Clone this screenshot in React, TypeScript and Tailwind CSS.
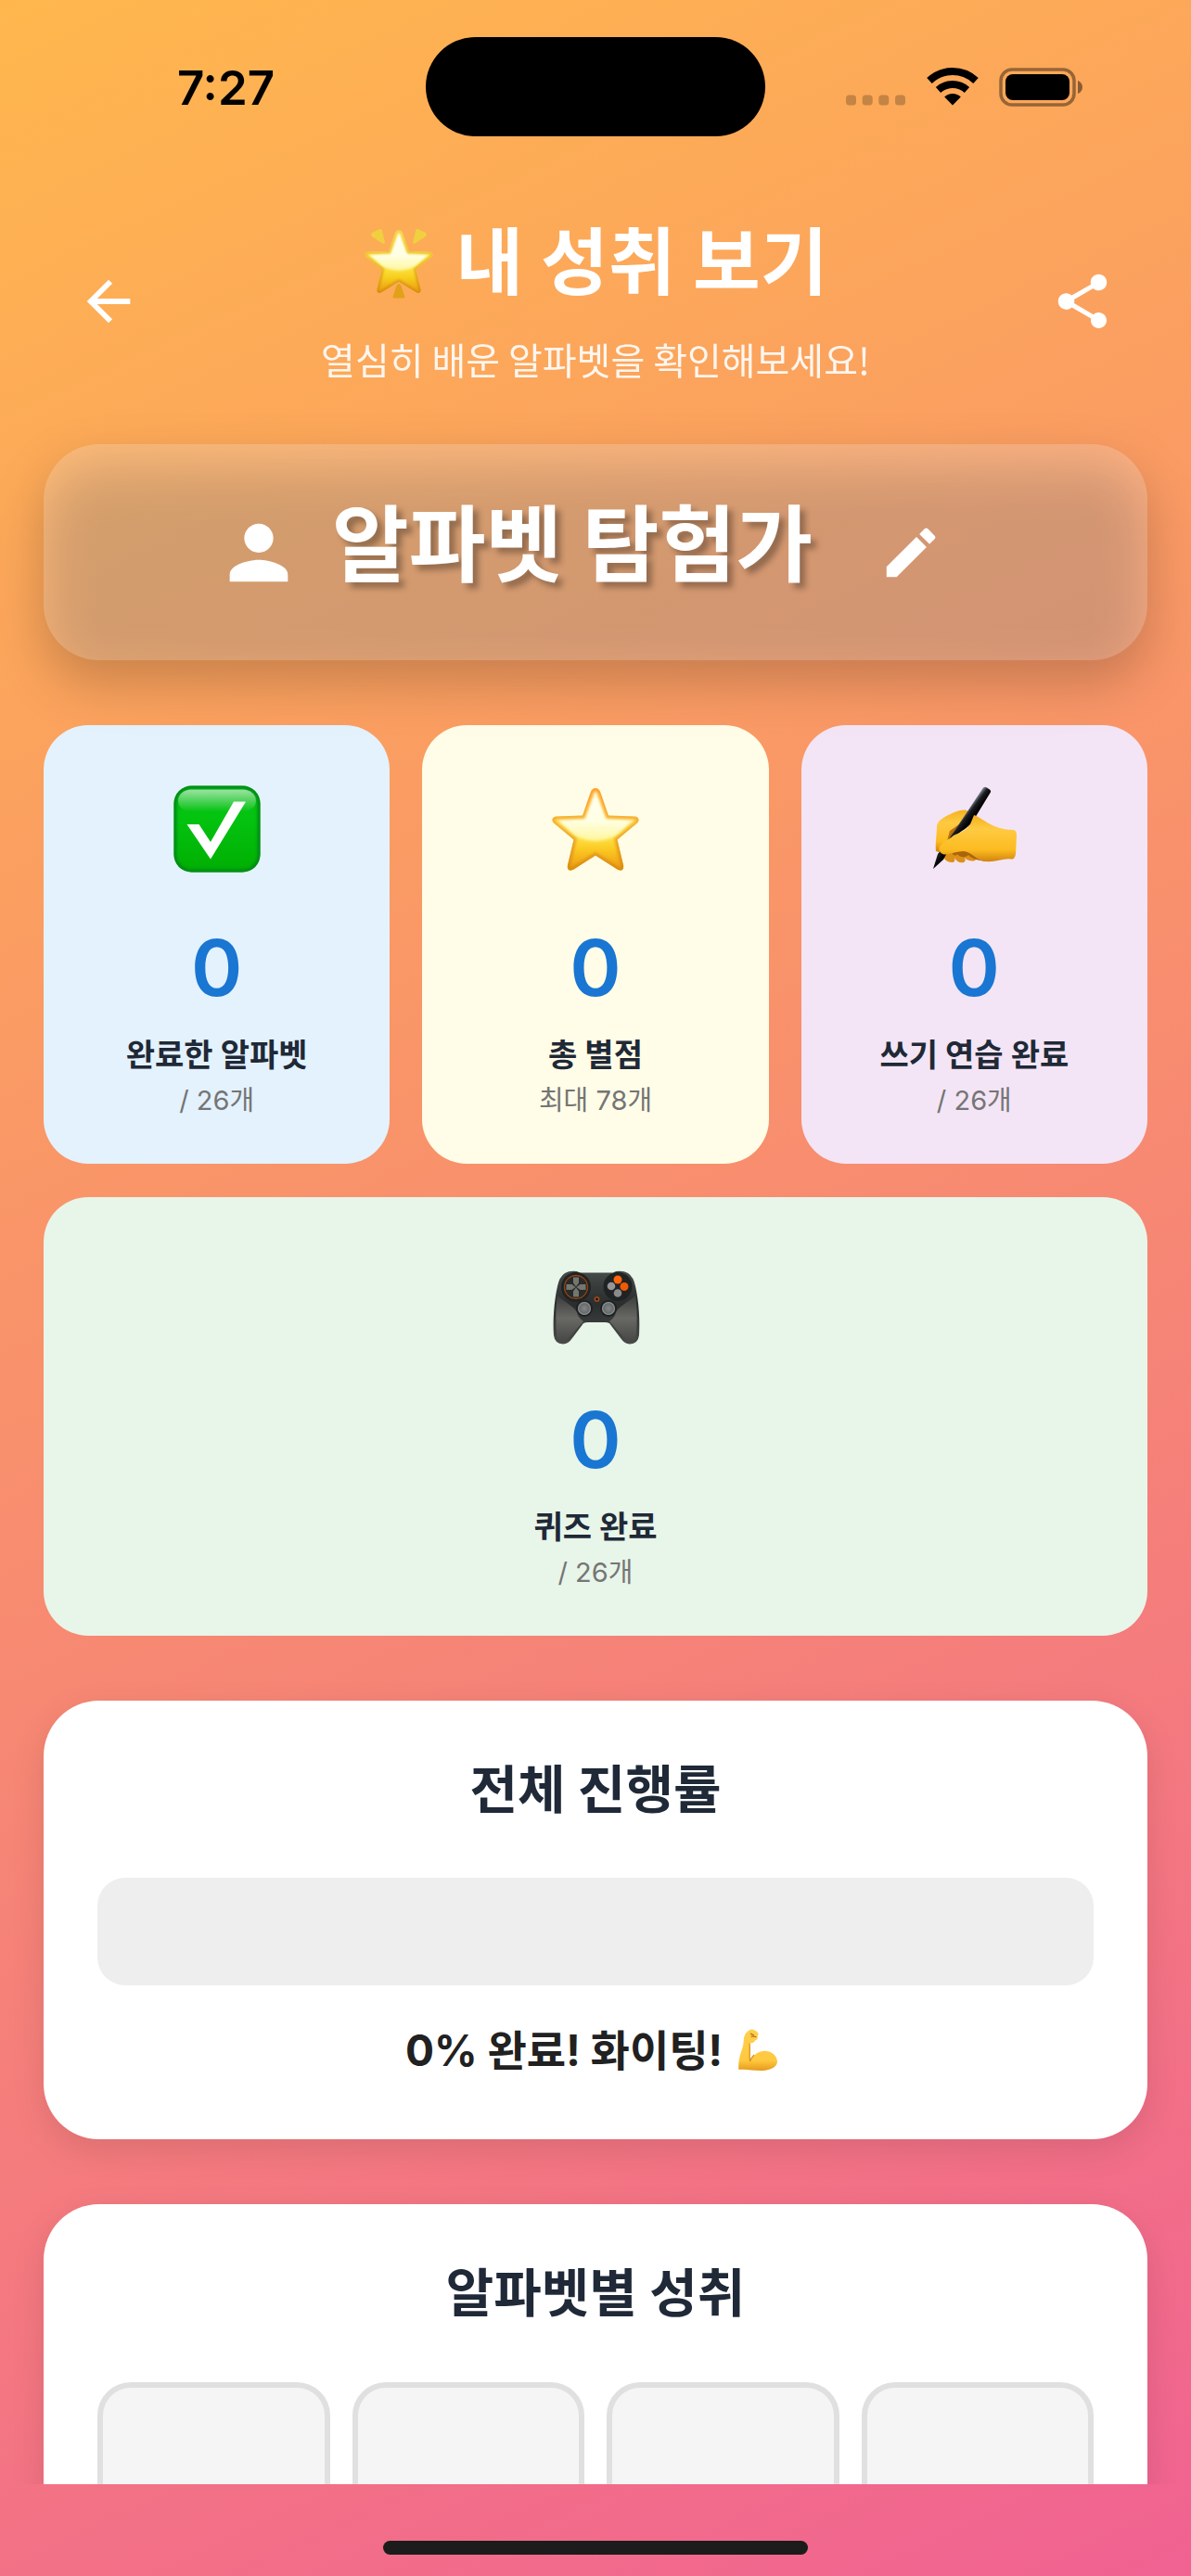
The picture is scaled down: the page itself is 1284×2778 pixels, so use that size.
import React, { useId } from "react";
import { MdArrowBack, MdShare, MdPerson, MdEdit } from "react-icons/md";

const STAR =
  "M50 6 C53 6 54.5 8 55.5 11 L64 35.5 L92 36.5 C97 36.7 98 41 94.5 44 L73.5 61.5 L80 89 C81 94 77.5 96 73.5 93.5 L50 78.5 L26.5 93.5 C22.5 96 19 94 20 89 L26.5 61.5 L5.5 44 C2 41 3 36.7 8 36.5 L36 35.5 L44.5 11 C45.5 8 47 6 50 6 Z";

function StarShape({ glow = false }: { glow?: boolean }) {
  const id = useId();
  return (
    <>
      <defs>
        <linearGradient id={id + "f"} x1="0" y1="0" x2="0" y2="1">
          <stop offset="0" stopColor={glow ? "#fff3a0" : "#ffdf8a"} />
          <stop offset="0.55" stopColor="#ffe84d" />
          <stop offset="0.75" stopColor={glow ? "#f7cf1d" : "#fbc822"} />
          <stop offset="1" stopColor="#eb9712" />
        </linearGradient>
        <linearGradient id={id + "e"} x1="0" y1="0" x2="0" y2="1">
          <stop offset="0" stopColor={glow ? "#f3d23c" : "#ff9e2c"} />
          <stop offset="0.45" stopColor={glow ? "#ecc02c" : "#f5b136"} />
          <stop offset="1" stopColor="#d98c0c" />
        </linearGradient>
        <linearGradient id={id + "h"} x1="0" y1="0" x2="0" y2="1">
          <stop offset="0" stopColor="#fffff0" />
          <stop offset="0.6" stopColor="#ffffe4" />
          <stop offset="1" stopColor="#fff69c" />
        </linearGradient>
        <clipPath id={id + "c"}>
          <path d={STAR} />
        </clipPath>
        <filter id={id + "b"} x="-10%" y="-10%" width="120%" height="120%">
          <feGaussianBlur stdDeviation="1.6" />
        </filter>
      </defs>
      <path d={STAR} fill={`url(#${id}f)`} />
      <g clipPath={`url(#${id}c)`}>
        <path
          d="M50 9 L62 38.5 L91 40 L74 56 C60 65 40 65 26 56 L9 40 L38 38.5 Z"
          fill={`url(#${id}h)`}
          filter={`url(#${id}b)`}
        />
        <path d={STAR} fill="none" stroke={`url(#${id}e)`} strokeWidth="6" filter={`url(#${id}b)`} />
      </g>
    </>
  );
}

function StarIcon() {
  return (
    <svg viewBox="2 2 96 96" className="size-24" role="img" aria-label="별">
      <StarShape />
    </svg>
  );
}

function GlowingStarIcon() {
  return (
    <svg viewBox="0 0 76 80" className="h-20 w-[76px]" role="img" aria-label="빛나는 별">
      <g transform="translate(-1 1) scale(0.78 0.76)">
        <StarShape glow />
      </g>
      <path d="M9 8 L17.500 4 Q19 3.500 19.700 5 L23 18.500 Q22.500 20.500 20.500 19.500 L9 12 Q7.500 10 9 8 Z" fill="#f0d03f" />
      <path d="M67 8 L58.500 4 Q57 3.500 56.300 5 L53 18.500 Q53.500 20.500 55.500 19.500 L67 12 Q68.500 10 67 8 Z" fill="#f0d03f" />
      <path d="M38 63 Q39.500 63 40.500 65.500 L44.500 77 Q44.500 78.500 43 78.500 H33 Q31.500 78.500 31.500 77 L35.500 65.500 Q36.500 63 38 63 Z" fill="#e2a118" />
    </svg>
  );
}

function CheckIcon() {
  return (
    <svg viewBox="0 0 96 96" className="size-24" role="img" aria-label="완료">
      <defs>
        <linearGradient id="ck" x1="0" y1="0" x2="0" y2="1">
          <stop offset="0" stopColor="#06ba18" />
          <stop offset="0.35" stopColor="#04c410" />
          <stop offset="1" stopColor="#00ae02" />
        </linearGradient>
        <linearGradient id="ckh" x1="0" y1="0" x2="0" y2="1">
          <stop offset="0" stopColor="#fff" stopOpacity="0.6" />
          <stop offset="1" stopColor="#fff" stopOpacity="0" />
        </linearGradient>
        <clipPath id="ckc">
          <rect x="1.500" y="1.500" width="93" height="93" rx="19" />
        </clipPath>
        <filter id="ckb" x="-10%" y="-10%" width="120%" height="120%">
          <feGaussianBlur stdDeviation="1.500" />
        </filter>
      </defs>
      <rect x="1.500" y="1.500" width="93" height="93" rx="19" fill="url(#ck)" />
      <g clipPath="url(#ckc)">
        <rect x="1.500" y="1.500" width="93" height="93" rx="19" fill="none" stroke="#048a12" strokeWidth="6" filter="url(#ckb)" />
      </g>
      <rect x="6" y="5.500" width="84" height="24" rx="14" fill="url(#ckh)" />
      <path d="M15.500 43 H28.500 L41 62 L66 18.500 H79 L41 80.500 Z" fill="#fff" />
    </svg>
  );
}

function WritingHandIcon() {
  return (
    <svg viewBox="-2 0 96 96" className="size-24" role="img" aria-label="쓰기">
      <defs>
        <linearGradient id="wh" x1="0" y1="0" x2="0" y2="1">
          <stop offset="0" stopColor="#f3b11e" />
          <stop offset="0.3" stopColor="#ffca42" />
          <stop offset="0.75" stopColor="#fcbb20" />
          <stop offset="1" stopColor="#d08410" />
        </linearGradient>
        <linearGradient id="wp" gradientUnits="userSpaceOnUse" x1="26" y1="44" x2="34" y2="50">
          <stop offset="0" stopColor="#7d828c" />
          <stop offset="0.4" stopColor="#1b1c20" />
          <stop offset="1" stopColor="#000" />
        </linearGradient>
      </defs>
      <path d="M13 76 C13 81 18 84 22 84 C25 84 26 82 25 79 C28 84 32 85 35 84 C37 83 37 81 36 79 C40 83 45 83 47 82 C49 81 48 79 46 76 L40 68 L22 68 Z" fill="#dd9016" />
      <path d="M22 73 L36 68 L60 83 C50 82 44 80 40 76 C36 80 30 78 28 75 C26 78 23 76 22 73 Z" fill="#a9640c" />
      <path d="M5 72 C4 64 6 54 6 46 C6 42 8 39 13 36 C20 32 29 27 37 27.500 L46 32 L26 52 L9 73 Z" fill="url(#wh)" />
      <path d="M20 50 L30 43 L25 55 L17 61 Z" fill="#b8700c" />
      <path d="M56 3.500 Q58 2 60 3.500 L63 5.500 Q65 7 63.500 9 L44 41 C36 50 30 50 26 57 L13 81 L2 91 L7 75 C15 66 19 58 25 50 Z" fill="url(#wp)" />
      <path d="M46 33 C57 37 66 49 89 49 Q92 50 92 55 L91 75 Q90 81 86 80.500 C78 79 70 84 58 83 C50 82 46 76 39 73 C33 70 25 74 18 75 C11 77 7 72 9 67 C14 60 20 59 24 55 C31 52 38 49 42 43 Z" fill="url(#wh)" />
    </svg>
  );
}

function GamepadIcon() {
  return (
    <svg viewBox="-1 -8 96 96" className="size-24" role="img" aria-label="게임">
      <defs>
        <linearGradient id="gb" x1="0" y1="0" x2="0" y2="1">
          <stop offset="0" stopColor="#454b49" />
          <stop offset="0.45" stopColor="#292d2d" />
          <stop offset="1" stopColor="#4a4b49" />
        </linearGradient>
        <linearGradient id="gg" x1="0" y1="0" x2="0" y2="1">
          <stop offset="0" stopColor="#3c3d3b" />
          <stop offset="0.5" stopColor="#686865" />
          <stop offset="1" stopColor="#484846" />
        </linearGradient>
        <radialGradient id="gs">
          <stop offset="0" stopColor="#858787" />
          <stop offset="0.75" stopColor="#676a6b" />
          <stop offset="1" stopColor="#a5a8a9" />
        </radialGradient>
      </defs>
      <path d="M14 10 Q19 7 27 8 L30 9.500 H66 L69 8 Q77 7 82 10 Q88 14 90 24 C94 42 95 62 94 77 Q93 86 84 86.500 Q78 86 74 80 L62 64 Q60 63 57 63 H39 Q36 63 34 64 L22 80 Q18 86 12 86.500 Q3 86 2 77 C1 62 2 42 6 24 Q8 14 14 10 Z" fill="url(#gb)" />
      <path d="M6 34 C14 42 22 44 27 52 C28 58 32 60 34 62 L19 79 Q15 84 10 83 Q5 82 5 75 C4 62 4 46 6 34 Z" fill="url(#gg)" />
      <path d="M90 34 C82 42 74 44 69 52 C68 58 64 60 62 62 L77 79 Q81 84 86 83 Q91 82 91 75 C92 62 92 46 90 34 Z" fill="url(#gg)" />
      <circle cx="26" cy="25" r="16" fill="#202323" />
      <circle cx="26" cy="25" r="12.500" fill="#282b2a" stroke="#934313" strokeWidth="1.300" />
      <path d="M23 14.500 h6 v6 l-3 4 l-3 -4 Z M23 35.500 h6 v-6 l-3 -4 l-3 4 Z M15.500 22 v6 h6 l4 -3 l-4 -3 Z M36.500 22 v6 h-6 l-4 -3 l4 -3 Z" fill="#74776f" />
      <circle cx="71" cy="24.500" r="15.500" fill="#202323" />
      <circle cx="71" cy="17" r="4.500" fill="#ff650a" />
      <circle cx="78" cy="24.500" r="4.500" fill="#ee5a05" />
      <circle cx="64" cy="24" r="4.300" fill="#969696" />
      <circle cx="71" cy="31.500" r="4.300" fill="#8b8b8b" />
      <circle cx="48.500" cy="38" r="2.200" fill="#1c1c1c" stroke="#b94c12" strokeWidth="1.300" />
      <circle cx="35" cy="48" r="9" fill="#1e2121" />
      <circle cx="61" cy="48" r="9" fill="#1e2121" />
      <circle cx="35" cy="48" r="7" fill="url(#gs)" />
      <circle cx="61" cy="48" r="7" fill="url(#gs)" />
    </svg>
  );
}

function BicepsIcon() {
  return (
    <svg viewBox="0 0 52 46" className="h-[46px] w-[52px]" role="img" aria-label="힘내요">
      <defs>
        <linearGradient id="bi" x1="0" y1="0" x2="0" y2="1">
          <stop offset="0" stopColor="#ffcf4f" />
          <stop offset="0.75" stopColor="#ffc93f" />
          <stop offset="1" stopColor="#e59a1c" />
        </linearGradient>
      </defs>
      <path d="M1.500 44 C0.500 38 2 30 5 22 C6.500 18 6.500 14 7 10 C8 5 11 1.500 15 0.500 C18 0.500 22 3 22.500 5 C22.800 6.500 22 7 21.500 8 C22.500 10 21.500 12 19.500 12 C18.500 14.500 16 15.500 13.500 15.500 C14 22 13 28 13.500 34 C18 26 27 22 34 24.500 C40 26.500 43 31 43 36 C42 41 36 44.500 27 45 C18 45.500 10 43 1.500 44 Z" fill="url(#bi)" />
      <path d="M13 15.500 C14 22 12.500 29 13.500 35 C14.500 32 16 30 18 28" fill="none" stroke="#d98f1a" strokeWidth="1.200" />
      <path d="M14 5 L18 7 M14.500 8 L20.500 8.500" stroke="#a8640f" strokeWidth="1.100" />
    </svg>
  );
}

function StatusBar() {
  return (
    <div className="grid h-[187px] shrink-0 grid-cols-[1fr_366px_1fr] items-start pt-10 text-black">
      <div className="pl-7 pt-[23px] text-center font-[Inter] text-[51px] font-semibold leading-[64px]">7:27</div>
      <div className="h-[107px] rounded-full bg-black" />
      <div className="flex h-[107px] items-center justify-center gap-[22px] pr-8">
        <svg viewBox="0 0 66 44" className="h-11 w-[66px]" fill="#000" fillOpacity="0.22" aria-label="신호 없음">
          <rect x="1" y="30.500" width="11" height="11" rx="3.500" />
          <rect x="18.700" y="30.500" width="11" height="11" rx="3.500" />
          <rect x="36.300" y="30.500" width="11" height="11" rx="3.500" />
          <rect x="54" y="30.500" width="11" height="11" rx="3.500" />
        </svg>
        <svg viewBox="0 0 56 41" className="h-[41px] w-14" fill="none" stroke="#000" strokeWidth="8" aria-label="와이파이">
          <path d="M3 14 C17 0.700 39 0.700 53 14" />
          <path d="M12.500 24 C21.500 16 34.500 16 43.500 24" />
          <path d="M28 28 C31.500 28 34.500 29.300 36.800 31.500 L28 40.500 L19.200 31.500 C21.500 29.300 24.500 28 28 28 Z" fill="#000" stroke="none" />
        </svg>
        <svg viewBox="0 0 90 42" className="h-[42px] w-[90px]" aria-label="배터리">
          <rect x="2" y="2" width="79" height="38" rx="12" fill="none" stroke="#000" strokeOpacity="0.4" strokeWidth="3.500" />
          <rect x="7" y="7" width="69" height="28" rx="8" />
          <path d="M85 14 C88 15 90 18 90 21 C90 24 88 27 85 28 Z" fillOpacity="0.45" />
        </svg>
      </div>
    </div>
  );
}

type Stat = { icon: React.ReactNode; value: number; label: string; note: string; tone: string };

const stats: Stat[] = [
  { icon: <CheckIcon />, value: 0, label: "완료한 알파벳", note: "/ 26개", tone: "bg-[#e3f2fd]" },
  { icon: <StarIcon />, value: 0, label: "총 별점", note: "최대 78개", tone: "bg-[#fffde7]" },
  { icon: <WritingHandIcon />, value: 0, label: "쓰기 연습 완료", note: "/ 26개", tone: "bg-[#f3e5f5]" },
  { icon: <GamepadIcon />, value: 0, label: "퀴즈 완료", note: "/ 26개", tone: "col-span-3 bg-[#e8f5e9]" },
];

function StatCard({ icon, value, label, note, tone }: Stat) {
  return (
    <article className={"flex h-[473px] flex-col items-center rounded-[48px] pt-16 " + tone}>
      {icon}
      <p className="mt-[52px] font-[Inter] text-[84px] font-semibold leading-[100px] text-[#1976d2]">{value}</p>
      <h2 className="mt-6 text-[34px] font-bold leading-[40px] text-[#1f2937]">{label}</h2>
      <p className="mt-2 text-[29px] leading-[42px] text-[#757575]">{note}</p>
    </article>
  );
}

const panel = "rounded-[60px] bg-white px-[58px] shadow-[0_12px_36px_rgba(0,0,0,0.1)]";
const panelTitle = "text-center text-[56px] font-bold leading-[72px] text-[#1f2937]";

export default function App() {
  return (
    <div className="flex h-screen flex-col overflow-hidden bg-[linear-gradient(155deg,#ffb74d,#f06292)] font-[Inter,'Noto_Sans_CJK_KR',sans-serif]">
      <StatusBar />
      <main className="flex min-h-0 flex-1 flex-col overflow-hidden px-[47px]">
        <header className="flex h-[292px] shrink-0 items-center justify-between pb-[17px] text-white">
          <button type="button" aria-label="뒤로" className="grid size-[140px] place-items-center">
            <MdArrowBack className="size-[70px]" />
          </button>
          <div className="flex flex-col items-center">
            <h1 className="flex items-center gap-6 text-[79px] font-bold leading-[100px]">
              <GlowingStarIcon />
              내 성취 보기
            </h1>
            <p className="mt-6 font-['Noto_Sans_CJK_KR',sans-serif] text-[40px] leading-[60px] opacity-90">열심히 배운 알파벳을 확인해보세요!</p>
          </div>
          <button type="button" aria-label="공유" className="grid size-[140px] place-items-center">
            <MdShare className="size-[70px]" />
          </button>
        </header>

        <section className="relative isolate h-[233px] shrink-0 text-white">
          <div aria-hidden="true" className="absolute inset-0 -z-10 translate-y-6 rounded-[60px] bg-black/20 blur-[27px]" />
          <div className="flex h-full items-center justify-center rounded-[60px] bg-white/20">
            <MdPerson className="size-[94px]" />
            <h2 className="ml-8 pb-4 text-[90px] font-bold leading-[120px] [text-shadow:6px_6px_6px_rgba(0,0,0,0.3)]">알파벳 탐험가</h2>
            <button type="button" aria-label="이름 편집" className="ml-9 grid size-[140px] place-items-center">
              <MdEdit className="size-[70px]" />
            </button>
          </div>
        </section>

        <section className="mt-[70px] grid shrink-0 grid-cols-3 gap-x-[35px] gap-y-9">
          {stats.map((s) => (
            <StatCard key={s.label} {...s} />
          ))}
        </section>

        <section className={"mt-[70px] h-[473px] shrink-0 pt-[60px] " + panel}>
          <h2 className={panelTitle}>전체 진행률</h2>
          <div role="progressbar" aria-label="전체 진행률" aria-valuenow={0} aria-valuemin={0} aria-valuemax={100} className="mt-[59px] h-[116px] rounded-[30px] bg-[#eeeeee]" />
          <p className="mt-10 flex items-center justify-center gap-4 text-[46px] font-bold leading-[60px] text-[#212121]">
            0% 완료! 화이팅!
            <BicepsIcon />
          </p>
        </section>

        <section className={"mt-[70px] shrink-0 pt-[60px] " + panel}>
          <h2 className={panelTitle}>알파벳별 성취</h2>
          <ul className="mt-[60px] grid grid-cols-4 gap-6">
            {["A", "B", "C", "D"].map((letter) => (
              <li key={letter} className="aspect-square rounded-[36px] border-6 border-[#e0e0e0] bg-[#f5f5f5]" />
            ))}
          </ul>
        </section>
      </main>
      <footer className="flex h-[99px] shrink-0 items-end justify-center pb-[23px]">
        <div className="h-[15px] w-[458px] rounded-full bg-[#1c1c1c]" />
      </footer>
    </div>
  );
}
